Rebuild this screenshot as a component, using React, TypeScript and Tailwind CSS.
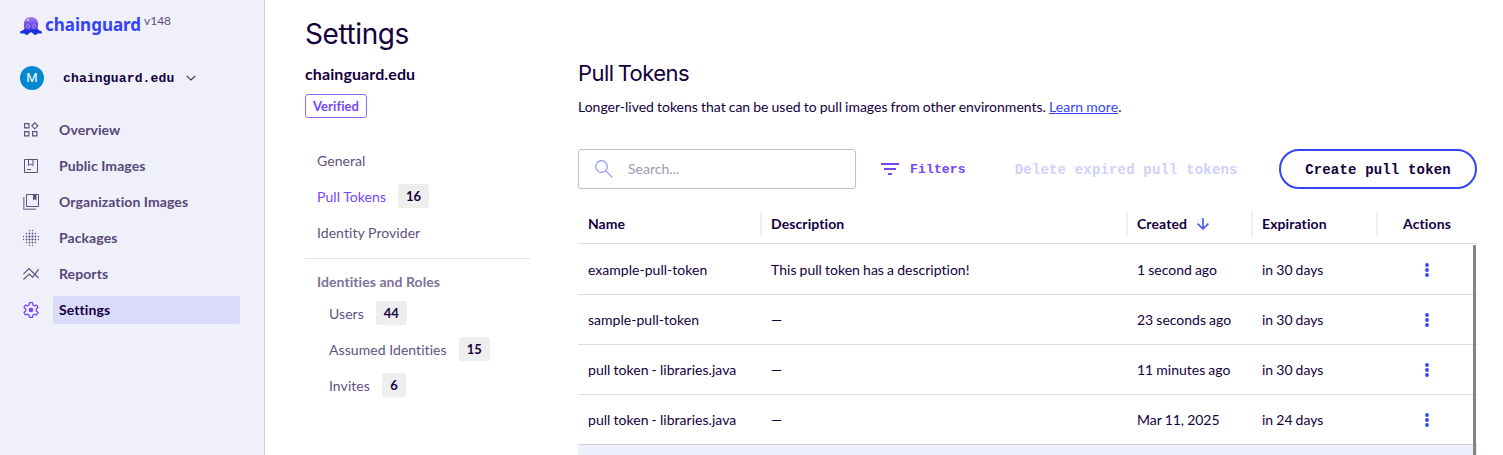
import React from "react";

type IconProps = { className?: string };

function Octopus() {
  return (
    <svg width="22" height="18" viewBox="0 0 22 18" className="shrink-0">
      <defs>
        <linearGradient id="octopus-head" x1="0" y1="0" x2="0" y2="1">
          <stop offset="0" stopColor="#a77bf5" />
          <stop offset="0.55" stopColor="#6f4ae6" />
          <stop offset="1" stopColor="#3a2fd8" />
        </linearGradient>
      </defs>
      <path
        d="M5 12.500C4.100 11 3.900 9 3.900 7C3.900 2.800 7 0 11 0S18.100 2.800 18.100 7C18.100 9 17.900 11 17 12.500L15 15H7Z"
        fill="url(#octopus-head)"
      />
      <path
        d="M4.600 11.500C6 13.600 9 12.900 11 12.900S16 13.600 17.400 11.500C18.300 13.300 19.800 13.700 21 13.900C22.300 14.200 22.300 16.200 20.900 16.500C19.500 16.800 18.300 16.300 17.600 16.200C17.200 17.800 15.300 18.200 14.100 17.500C13 16.800 12.600 15.200 11 15.200S9 16.800 7.900 17.500C6.700 18.200 4.800 17.800 4.400 16.200C3.700 16.300 2.500 16.800 1.100 16.500C-.3 16.200-.3 14.200 1 13.900C2.200 13.700 3.700 13.300 4.600 11.500Z"
        fill="#1c2fe0"
      />
      <circle cx="8" cy="9.500" r="1.700" fill="#5a45c8" stroke="#a9a4f3" strokeWidth="0.900" />
      <circle cx="14" cy="9.500" r="1.700" fill="#5a45c8" stroke="#a9a4f3" strokeWidth="0.900" />
      <ellipse cx="8" cy="3" rx="1.500" ry="0.900" fill="#d9c8ff" transform="rotate(-35 8 3)" />
    </svg>
  );
}

const iconBase = "block size-4 shrink-0";

function OverviewIcon() {
  return (
    <svg viewBox="0 0 16 16" className={iconBase} fill="none" stroke="currentColor">
      <path
        d="M1.600 1.600h4.300v4.300h-4.300zM1.600 9.600h4.300v4.300h-4.300zM9.600 9.600h4.300v4.300h-4.300zM11.800 .8l3 3l-3 3l-3-3z"
        strokeWidth="1.150"
      />
    </svg>
  );
}

function PublicImagesIcon() {
  return (
    <svg viewBox="0 0 16 16" className={iconBase} fill="none" stroke="currentColor">
      <path d="M1.500 1.500h13v13h-13zM5.500 1.500v6l2.200-1.500l2.300 1.500v-6M4 11.500h4" />
    </svg>
  );
}

function OrgImagesIcon() {
  return (
    <svg viewBox="0 0 16 16" className={iconBase} fill="none" stroke="currentColor">
      <path d="M3.500 .5h12v12h-12z" />
      <path d="M.8 3v12.200h12.200" strokeWidth="1.500" strokeOpacity="0.650" />
      <path d="M10 .5h3.500v6l-1.750-1.300l-1.750 1.300z" fill="currentColor" stroke="none" />
    </svg>
  );
}

function PackagesIcon() {
  const steps = [0.5, 3.5, 6.5, 9.5, 12.5, 15.5];
  return (
    <svg viewBox="0 0 16 16" className={iconBase} fill="currentColor">
      {steps.flatMap((y, row) =>
        steps.map((x, col) => {
          const edge = [row, col].filter((v) => v === 0 || v === 5).length;
          const ring = [row, col].filter((v) => v === 1 || v === 4).length;
          if (edge === 2 || (edge === 1 && ring === 1)) return null;
          const r = edge ? 0.65 : ring === 2 ? 0.8 : ring === 1 ? 0.9 : 1.1;
          return <circle key={`${row}-${col}`} cx={x} cy={y} r={r} />;
        }),
      )}
    </svg>
  );
}

function ReportsIcon() {
  return (
    <svg viewBox="0 0 16 16" className={iconBase} fill="none" stroke="currentColor" strokeWidth="1.100">
      <path d="M.4 8.200L6 2.600L15.600 12M.4 13.500L6.300 8L9.600 11.300L15.700 3.200" />
    </svg>
  );
}

function SettingsIcon() {
  return (
    <svg viewBox="0 0 16 16" className={iconBase} fill="none" stroke="currentColor" strokeWidth="1.250" strokeLinejoin="round">
      <path d="M6.500 .7h3l.4 2.200l1.500.9l2.100-.8l1.500 2.600l-1.700 1.400v2l1.700 1.400l-1.500 2.600l-2.100-.8l-1.500.9l-.4 2.200h-3l-.4-2.200l-1.500-.9l-2.100.8l-1.500-2.600l1.700-1.400v-2l-1.700-1.400l1.500-2.600l2.100.8l1.500-.9z" />
      <circle cx="8" cy="8" r="2.300" fill="currentColor" stroke="none" />
    </svg>
  );
}

function SearchIcon({ className }: IconProps) {
  return (
    <svg width="18" height="18" viewBox="0 0 18 18" className={className} fill="none" stroke="#8f95fa" strokeWidth="1.200">
      <circle cx="6.500" cy="6.500" r="5.800" />
      <path d="M10.800 10.800L17.300 17.300" />
    </svg>
  );
}

const nav = [
  { label: "Overview", Icon: OverviewIcon },
  { label: "Public Images", Icon: PublicImagesIcon },
  { label: "Organization Images", Icon: OrgImagesIcon },
  { label: "Packages", Icon: PackagesIcon },
  { label: "Reports", Icon: ReportsIcon },
  { label: "Settings", Icon: SettingsIcon, active: true },
];

function Sidebar() {
  return (
    <aside className="flex w-[265px] shrink-0 flex-col border-r border-[#d0cde3] bg-[#f0f0fa] pl-5">
      <div className="flex h-[42px] items-start">
        <div className="mt-[17px]">
          <Octopus />
        </div>
        <span className="ml-[3px] mt-[11px] w-[96px] font-['Noto_Sans',sans-serif] text-[17px] leading-[28px] font-bold text-[#3443f4]">
          chainguard
        </span>
        <span className="ml-[3px] mt-[13px] text-[12px] leading-[16px] text-[#5d4f80]">v148</span>
      </div>
      <div className="mt-6 flex h-6 items-center">
        <span className="flex size-6 items-center justify-center rounded-full bg-[#0288d1] font-[Roboto,sans-serif] text-[13px] text-white">
          M
        </span>
        <span className="ml-[19px] pt-0.5 font-['Liberation_Mono',monospace] text-[13px] font-bold tracking-[0.16px] text-[#14003d]">
          chainguard.edu
        </span>
        <svg width="10" height="6" viewBox="0 0 10 6" className="ml-3" fill="none" stroke="#3c2a62" strokeWidth="1.100">
          <path d="M.7 .8L5 5L9.300 .8" />
        </svg>
      </div>
      <nav className="mt-[26px] flex flex-col gap-2">
        {nav.map(({ label, Icon, active }) => (
          <a key={label} className={`flex h-7 items-center pl-[3px] ${active ? "text-[#7545fb]" : "text-[#5c4f80]"}`}>
            <Icon />
            <span
              className={`ml-[14px] flex h-7 w-[187px] items-center rounded-[2px] pl-1.5 font-bold tracking-[0.08px] ${
                active ? "bg-[#dadafa] text-[#14003d]" : "text-[#564779]"
              }`}
            >
              {label}
            </span>
          </a>
        ))}
      </nav>
    </aside>
  );
}

function SubItem({ label, count, active }: { label: string; count?: number; active?: boolean }) {
  return (
    <div className={`flex h-9 items-center gap-3 ${active ? "text-[#7545fb]" : "text-[#5f5280]"}`}>
      <span className="tracking-[0.06px]">{label}</span>
      {count !== undefined && (
        <span
          className={`mb-0.5 flex h-6 items-center justify-center rounded-[3px] bg-[#eeeeee] text-[13px] font-bold text-[#14003d] ${
            count > 9 ? "w-[31px]" : "w-6"
          }`}
        >
          {count}
        </span>
      )}
    </div>
  );
}

function SettingsMenu() {
  return (
    <section className="w-[225px] shrink-0">
      <h1 className="mt-[14px] font-[Inter,sans-serif] text-[28px] leading-10 font-normal tracking-[-0.4px]">Settings</h1>
      <p className="mt-[10px] text-[16px] leading-5 font-bold tracking-[0.1px]">chainguard.edu</p>
      <div className="mt-[10px] flex">
        <span className="flex h-6 w-[62px] items-center justify-center rounded-[3px] border border-[#9069fc] text-[13px] font-bold tracking-[0.1px] text-[#7545fb]">
          Verified
        </span>
      </div>
      <div className="mt-[25px] border-b border-[#dfdde9] pb-[7px] pl-3">
        <SubItem label="General" />
        <SubItem label="Pull Tokens" count={16} active />
        <SubItem label="Identity Provider" />
      </div>
      <div className="pl-3">
        <h3 className="mt-[13px] mb-1 leading-5 font-bold tracking-[0.06px] text-[#7d7299]">Identities and Roles</h3>
        <div className="pl-3">
          <SubItem label="Users" count={44} />
          <SubItem label="Assumed Identities" count={15} />
          <SubItem label="Invites" count={6} />
        </div>
      </div>
    </section>
  );
}

const rows = [
  ["example-pull-token", "This pull token has a description!", "1 second ago", "in 30 days"],
  ["sample-pull-token", "—", "23 seconds ago", "in 30 days"],
  ["pull token - libraries.java", "—", "11 minutes ago", "in 30 days"],
  ["pull token - libraries.java", "—", "Mar 11, 2025", "in 24 days"],
];

const columns = "grid grid-cols-[183px_366px_125px_125px_100px] items-center";

function TokenTable() {
  return (
    <div className="mt-4 w-[899px]">
      <div className={`${columns} h-[39px] border-b border-[#dfdfe3] font-bold`}>
        <span className="pl-[10px]">Name</span>
        {["Description", "Created", "Expiration", "Actions"].map((label) => (
          <span
            key={label}
            className={`-ml-px flex h-6 items-center border-l-2 border-[#eeeeee] tracking-[0.1px] ${label === "Actions" ? "justify-center pr-px" : "pl-[9px]"}`}
          >
            {label}
            {label === "Created" && (
              <svg width="12" height="12" viewBox="0 0 12 12" className="ml-[10px]" fill="none" stroke="#4854fa" strokeWidth="1.600">
                <path d="M6 0V11M.6 5.600L6 11L11.400 5.600" />
              </svg>
            )}
          </span>
        ))}
      </div>
      <div className="relative">
        {rows.map(([name, description, created, expiration], i) => (
          <div
            key={i}
            className={`${columns} border-b [word-spacing:-0.5px] ${i === 0 ? "h-[51px] pt-px" : "h-[50px]"} ${i === 3 ? "border-[#cfcde6]" : "border-[#dcdbe5]"}`}
          >
            <span className="pl-[10px] tracking-[0.03px]">{name}</span>
            <span className="pl-[10px] tracking-[0.02px]">{description}</span>
            <span className="pl-[10px]">{created}</span>
            <span className="pl-[10px]">{expiration}</span>
            <svg width="4" height="14" viewBox="0 0 4 14" className="justify-self-center" fill="#3443f4">
              <circle cx="2" cy="2" r="1.900" />
              <circle cx="2" cy="7" r="1.900" />
              <circle cx="2" cy="12" r="1.900" />
            </svg>
          </div>
        ))}
        <div className="h-[10px] bg-[#eeeffe]" />
        <div className="absolute top-px right-[1px] bottom-0 w-[3px] rounded-t-[1px] bg-[#7f8583]" />
      </div>
    </div>
  );
}

export default function App() {
  return (
    <div className="flex h-[455px] w-[1503px] overflow-hidden bg-white font-[Lato,sans-serif] text-[14px] leading-5 text-[#14003d] [font-variant-ligatures:none]">
      <Sidebar />
      <main className="flex pl-10">
        <SettingsMenu />
        <section className="ml-12 w-[899px]">
          <h2 className="mt-[57px] font-[Inter,sans-serif] text-[22px] leading-8 font-normal tracking-[-0.55px] [word-spacing:-1.5px]">
            Pull Tokens
          </h2>
          <p className="mt-2 [word-spacing:-0.52px]">
            Longer-lived tokens that can be used to pull images from other environments.{" "}
            <a className="tracking-[0.05px] text-[#3443f4] underline">Learn more</a>.
          </p>
          <div className="mt-8 flex h-10 items-center font-['Liberation_Mono',monospace] font-bold">
            <div className="flex h-10 w-[278px] items-center rounded-[3px] border border-[#c2bed2] pl-4 font-[Lato,sans-serif] font-normal text-[#a19aaf]">
              <SearchIcon />
              <span className="ml-[15px]">Search...</span>
            </div>
            <svg width="18" height="12" viewBox="0 0 18 12" className="ml-[25px]" fill="#7545fb">
              <path d="M0 0h18v2H0zM3 5h12v2H3zM7 10h4v2H7z" />
            </svg>
            <span className="ml-[11px] pt-0.5 text-[13px] tracking-[0.16px] text-[#7545fb]">Filters</span>
            <span className="ml-[49px] pt-0.5 tracking-[0.17px] whitespace-nowrap text-[#cfd0fc]">Delete expired pull tokens</span>
            <button className="ml-auto h-10 w-[198px] rounded-full border-2 border-[#3443f4] pt-0.5 tracking-[0.17px] whitespace-nowrap">
              Create pull token
            </button>
          </div>
          <TokenTable />
        </section>
      </main>
    </div>
  );
}
